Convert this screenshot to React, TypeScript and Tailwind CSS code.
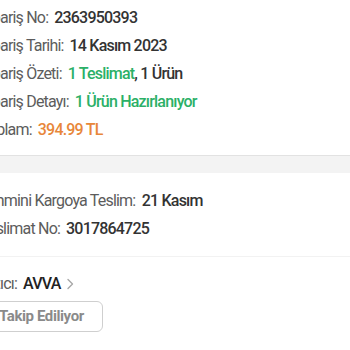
import React from 'react'

const ROWS = [
  { label: 'Sipariş No:', value: <span className="text-[#333]">2363950393</span> },
  { label: 'Sipariş Tarihi:', value: <span className="text-[#333]">14 Kasım 2023</span> },
  {
    label: 'Sipariş Özeti:',
    value: (
      <span>
        <span className="text-[#2bb067]">1 Teslimat</span>
        <span className="text-[#333]">, 1 Ürün</span>
      </span>
    ),
  },
  { label: 'Sipariş Detayı:', value: <span className="text-[#2bb067]">1 Ürün Hazırlanıyor</span> },
  { label: 'Toplam:', value: <span className="text-[#e8873a]">394.99 TL</span> },
]

export default function App() {
  return (
    <div className="w-[350px] h-[350px] overflow-hidden bg-white font-['Roboto',sans-serif] text-[16px] tracking-[-0.8px]">
      <div className="ml-[-20px] pt-[4px] flex flex-col">
        {ROWS.map((row, i) => (
          <div key={i} className="h-[28px] flex items-center gap-[6px] whitespace-nowrap">
            <span className="text-[#5c5c5c]">{row.label}</span>
            <span className="font-medium">{row.value}</span>
          </div>
        ))}
      </div>

      <div className="mt-[11px] h-[18px] bg-[#f3f3f3] border-t border-[#e2e2e2]" />

      <div className="ml-[-20px] pt-[14px] flex flex-col">
        <div className="h-[28px] flex items-center whitespace-pre">
          <span className="text-[#5c5c5c]">Tahmini Kargoya Teslim:  </span>
          <span className="text-[#333] font-medium">21 Kasım</span>
        </div>
        <div className="h-[28px] flex items-center gap-[6px] whitespace-nowrap">
          <span className="text-[#5c5c5c]">Teslimat No:</span>
          <span className="text-[#333] font-medium">3017864725</span>
        </div>
      </div>

      <div className="mt-[13px] h-px bg-[#f2f2f2]" />

      <div className="ml-[-21px] pt-[13px]">
        <div className="h-[28px] flex items-center gap-[6px] whitespace-nowrap">
          <span className="text-[#5c5c5c]">Satıcı:</span>
          <span className="text-[#222] font-medium">AVVA</span>
          <svg width="8" height="12" viewBox="0 0 8 12">
            <path d="M2 1.5 L6.5 6 L2 10.5" fill="none" stroke="#a8a8a8" strokeWidth="1.4" strokeLinecap="round" strokeLinejoin="round" />
          </svg>
        </div>
        <button className="mt-[3px] h-[31px] pl-[19px] pr-[18px] border border-[#cfcfcf] rounded-md text-[#8a8a8a] font-bold text-[15px] tracking-[-0.4px]">
          Takip Ediliyor
        </button>
      </div>
    </div>
  )
}
